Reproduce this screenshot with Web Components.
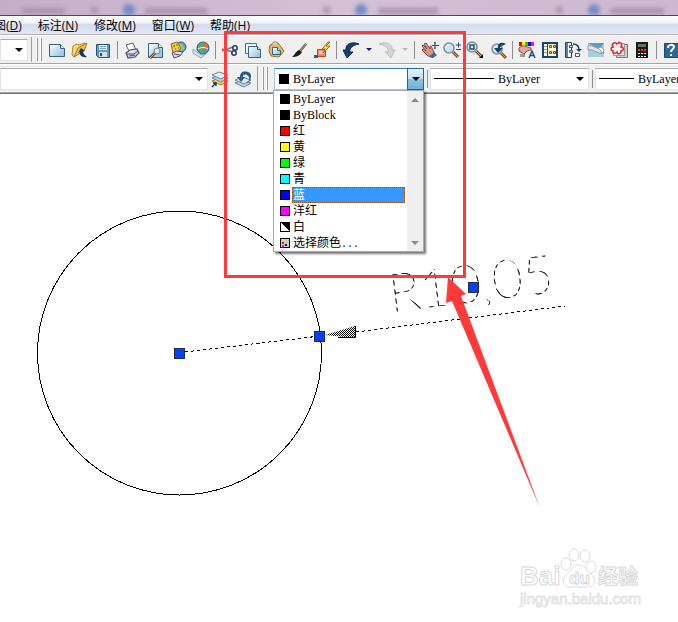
<!DOCTYPE html>
<html lang="zh-CN">
<head>
<meta charset="utf-8">
<title>CAD</title>
<style>
html, body { height: 100%; }
body { margin: 0; background: #fff; color: #000; font: 12px/16px "Liberation Serif", "Noto Sans CJK SC", serif; overflow: hidden; }
</style>
</head>
<body>
<cad-app></cad-app>
<script>
const define = (name, html, init) => customElements.define(name, class extends HTMLElement {
  constructor() {
    super();
    this.attachShadow({ mode: 'open' }).innerHTML = html;
  }
  connectedCallback() { if (init) init(this, this.shadowRoot); }
});

/* Icons share a 20x20 grid. */
const lens = (x, y) => `<path d="M${x + 4} ${y + 4}l5 5" stroke="#8a4a1c" stroke-width="3"/><path d="M${x + 4} ${y + 4}l5 5" stroke="#e09a50"/><circle cx="${x}" cy="${y}" r="5" fill="#cfe6f2" stroke="#7890a4" stroke-width="1.6"/><path d="M${x - 3} ${y}a3 3 0 0 1 3-3" stroke="#fff" fill="none"/>`;
const printer = (body, x, y) => `<g transform="translate(${x} ${y})"><path d="M4 7L1 1l7-2 3 7" fill="#fff" stroke="#62627e"/><path d="M1 9l4-3 7-1 2 4-4 4-7 1z" fill="${body}" stroke="#4d4d70" stroke-width="1.2"/><path d="M2 10l7 0 4-3M4 12l6-1" stroke="#4d4d70" fill="none"/><path d="M4 8l5-1" stroke="#fff"/></g>`;
const layers = `<path d="M2 12l7-3 9 3-7 4z" fill="#f2d437" stroke="#a48018"/><path d="M2 9l7-3 9 3-7 4z" fill="#bfd2e1" stroke="#6487a3"/><path d="M2 6l7-3 9 3-7 4z" fill="#e4eef6" stroke="#6487a3"/>`;
const ICONS = {
  new: `<path d="M2.500 4.500h11l4 4v8h-15z" fill="url(#p)" stroke="#346481"/><path d="M13.500 4.500v4h4" fill="#fff" stroke="#346481"/>`,
  open: `<path d="M3 6l4-2 2 1 6-2-2 4-9 10-2-2z" fill="#f8d978" stroke="#b08520"/><path d="M4 17L8 8l9-5-3 8z" fill="#efbd47" stroke="#a77a18"/><path d="M17 17c-5 1-8-2-7-5l-2 1 3-5 4 3h-2c0 2 1 4 4 6z" fill="#17385f"/>`,
  save: `<path d="M3.500 4.500h13v13h-11l-2-2z" fill="#5b9bca" stroke="#24567f"/><path d="M6 5h8v5H6z" fill="#f2f8fc"/><path d="M7 6.500h6M7 8.500h6" stroke="#77a4c4"/><path d="M6 12h8v5H6z" fill="#d5dfe6"/><path d="M7 13h2v3H7z" fill="#24567f"/>`,
  print: printer('#d9d9e6', 3, 4),
  preview: `<path d="M3.500 3.500h10l4 4v10h-14z" fill="url(#p)" stroke="#346481"/><path d="M13.500 3.500v4h4" fill="#fff" stroke="#346481"/><path d="M10 13l-5 5" stroke="#8a4a1c" stroke-width="3"/><path d="M10 13l-5 5" stroke="#e9a45f"/><circle cx="12" cy="11" r="3" fill="#dcedf6" stroke="#6c8396"/>`,
  publish: `<circle cx="13" cy="7" r="5" fill="#65a7c5" stroke="#275d80"/><path d="M11 3l4 2 1 4-3 2z" fill="#a9c76f"/><path d="M4 8L3 4l6-2 4 6-3 4-5 1z" fill="#f5ca3e" stroke="#94671a"/><path d="M5 6h2M8 5h2M7 9h1M10 8h1" stroke="#663"/><path d="M4 13l5-2 6 1-3 4-6 2z" fill="#dedeea" stroke="#4d4d70"/><path d="M6 14l6 1" stroke="#4d4d70"/>`,
  globe: `<circle cx="12" cy="8" r="6" fill="#4a9cc3" stroke="#245c82"/><path d="M12 2c-4 2-4 9-1 12l2-6z" fill="#67ae50"/><path d="M12 2c4 1 6 4 5 7h-5z" fill="#e2674c"/><path d="M7 9c3-2 7-2 10 0" stroke="#fff" fill="none"/><path d="M2 9l8 6 5-1-5 4-8-5z" fill="#d9e6ee" stroke="#8ca7b8"/>`,
  cut: `<path d="M2 9l11 3M2 11l11-4" stroke="#777" stroke-width="1.6"/><circle cx="15" cy="8" r="2.200" fill="none" stroke="#263d74" stroke-width="1.5"/><circle cx="14" cy="13" r="2.200" fill="none" stroke="#263d74" stroke-width="1.5"/>`,
  copy: `<path d="M2.500 3.500h11v10h-11z" fill="#edf6fa" stroke="#427390"/><path d="M5.500 6.500h9l3 3v8h-12z" fill="url(#p)" stroke="#346481"/><path d="M14.500 6.500v3h3" fill="#fff" stroke="#346481"/>`,
  paste: `<path d="M4 5l8-2 6 8-5 6-8-1-2-5z" fill="#e9bc56" stroke="#9c6e22"/><path d="M6 5c0-4 5-4 6-1" fill="#ddd" stroke="#777"/><path d="M6.500 7.500h5l3 3v4h-8z" fill="url(#p)" stroke="#346481"/><path d="M11.500 7.500v3h3" fill="#fff" stroke="#346481"/>`,
  brush: `<path d="M17 4l-6 7" stroke="#70442d" stroke-width="2.400"/><path d="M17 4l-6 7" stroke="#d7a77a"/><path d="M10 10l3 2c-2 4-6 5-10 5 3-2 3-5 7-7z" fill="#1e1a1a"/>`,
  block: `<path d="M5.500 9.500h8v7h-8z" fill="#f58b67" stroke="#c8401f"/><path d="M7 11h5v3H7z" fill="#ffc3a6"/><path d="M2 15h4v3H2z" fill="#1768b3"/><path d="M16 2l-6 7h3l-2 4 7-7h-4l4-4z" fill="#ffdf2f" stroke="#98711c"/>`,
  undo: `<path d="M18 4C11 1 4 4 5 10H2l4 8 6-6H9c-1-4 3-7 9-8z" fill="#173f6d" stroke="#102f54"/>`,
  redo: `<path d="M2 4c7-3 14 0 13 6h3l-4 8-6-6h3c1-4-3-7-9-8z" fill="#d4d6d7" stroke="#b9bcbd"/>`,
  pan: `<path d="M9 16L3 10l1-1 3 2-4-5 1-1 4 4-3-5 2-1 4 6V6h1l3 6-1 5z" fill="#d79384" stroke="#8d4c40"/><path d="M10 17l5-5 3 3-4 3z" fill="#42668c"/><path d="M16 2v7M13 5.500h7M15 3h2M15 8h2" stroke="#244b78"/>`,
  zoom: lens(7, 8) + `<path d="M14 5h5M16.500 2.500v5M14 9.500h5" stroke="#244b78"/>`,
  zoomwin: lens(7, 7) + `<path d="M5 5h4v4H5z" fill="none" stroke="#264d70" stroke-width="1.400"/><path d="M18 14v4h-4z" fill="#000"/>`,
  zoomprev: lens(9, 9) + `<path d="M18 4c-5-3-9 0-8 4H6l4 5 5-5h-3c0-2 2-2 6-4z" fill="#173f6d"/>`,
  props: `<path d="M2 2h3v4H2z" fill="#f00"/><path d="M5 2h3v4H5z" fill="#ff0"/><path d="M8 2h3v4H8z" fill="#0d0"/><path d="M11 2h3v4h-3z" fill="#00f"/><path d="M14 2h3v4h-3z" fill="#f0f"/><path d="M2 8c4-4 7-1 12 0v2l-4 1-3 3-5-3z" fill="#e8a79c" stroke="#8d4c40"/><path d="M3 14h5v3H3z" fill="#9a9a9a"/><path d="M12 18l3-7 3 7M13 15.500h4" fill="none" stroke="#244b78" stroke-width="1.400"/>`,
  design: `<path d="M3 3h14v14H3z" fill="#fffbe0" stroke="#19456d" stroke-width="2"/><path d="M7.500 3v14" stroke="#19456d"/><path d="M4 6.500h3M4 9.500h3M4 12.500h3" stroke="#78a0c0"/><path d="M9.500 5.500h2v2h-2zM13.500 5.500h2v2h-2zM9.500 11.500h2v2h-2zM13.500 11.500h2v2h-2z" fill="#f4cf48" stroke="#555"/>`,
  palette: `<path d="M2.500 2.500h6v15h-6z" fill="#fff" stroke="#19456d"/><path d="M3 3h2v14H3z" fill="#4e87b2"/><path d="M6.500 5.500h3v2h-3zM6.500 10.500h3v2h-3z" fill="#efd060" stroke="#456"/><path d="M10 4c4 0 6 2 6 6" fill="none" stroke="#19456d" stroke-width="1.500"/><path d="M13 9h6l-3 3z" fill="#19456d"/><path d="M12.500 13.500h4v3h-4z" fill="#fff" stroke="#456"/>`,
  sheets: `<path d="M2 3h16v14H2z" fill="#a6cde0"/><path d="M2 3h16l-5 6-7-4z" fill="#5f99be"/><path d="M2 6c5-2 8 4 13 2l3 5c-6 2-9-4-16-3z" fill="#e3e5e2" stroke="#8e9999"/><path d="M12 8c3-2 6 0 6 3l-3 3c1-3-1-4-3-6z" fill="#f6f6f2" stroke="#8e9999"/>`,
  markup: `<path d="M7.500 4.500h11v13h-11z" fill="#ccc" stroke="#777"/><path d="M4.500 3.500h11v12h-11z" fill="#f3f3f3" stroke="#999"/><path d="M4 11c-3-1-2-4 0-4-2-3 2-6 4-3 3-3 6 0 4 3 3 0 3 4 0 4 0 4-4 3-4 1-2 2-5 1-4-1z" fill="#fff" stroke="#f02330" stroke-width="1.600"/>`,
  calc: `<path d="M4 2h12v16H4z" fill="#191919"/><path d="M6 4h8v3H6z" fill="#59785b"/><path d="M6 10h2M9 10h2M12 10h2" stroke="#e33" stroke-width="2"/><path d="M6 13.500h2M9 13.500h2M12 13.500h2M6 16.500h2M9 16.500h2M12 16.500h2" stroke="#eee"/>`,
  help: `<path d="M3.500 3.500h14v14h-14z" fill="#2e6695" stroke="#174a78"/><path d="M7 8c0-4 6-4 6-1 0 2-3 2-3 5M10 14v2" fill="none" stroke="#fff" stroke-width="2"/>`,
  layers: layers + `<path d="M2 18l4-4M3 14h3v3" stroke="#15375c" fill="none" stroke-width="1.400"/>`,
  layerprev: `<path d="M2 14l7-3 9 3-7 4z" fill="#c2d2df" stroke="#6487a3"/><path d="M2 11l7-3 9 3-7 4z" fill="#dce7ef" stroke="#6487a3"/><path d="M17 4C11 1 7 3 7 8H4l4 5 4-5h-2c0-3 3-3 5-1 3 3 0 6-2 8 5-3 6-8 4-11z" fill="#2b5b86"/>`
};

define('cad-icon', `<style>:host{display:block;width:20px;height:20px}svg{display:block;width:100%;height:100%}</style><svg viewBox="0 0 20 20" aria-hidden="true"></svg>`,
  (el, root) => { root.querySelector('svg').innerHTML = `<defs><linearGradient id="p" x2="1" y2="1"><stop stop-color="#fff"/><stop offset="1" stop-color="#8dbcd6"/></linearGradient></defs><g fill="none">${ICONS[el.getAttribute('name')]}</g>`; });

define('tool-button', `<style>:host{display:block;flex:none;width:23px}button{display:flex;align-items:center;justify-content:center;width:100%;height:24px;padding:0;border:0;background:none}</style><button type="button"><cad-icon></cad-icon></button>`,
  (el, root) => {
    root.querySelector('button').setAttribute('aria-label', el.getAttribute('icon'));
    const old = root.querySelector('cad-icon'), icon = document.createElement('cad-icon');
    icon.setAttribute('name', el.getAttribute('icon'));
    old.replaceWith(icon);
  });

define('caret-button', `<style>:host{display:block;flex:none;width:13px;color:#101d7d}:host([off]){color:#b8babb}button{display:flex;align-items:center;justify-content:center;width:100%;height:24px;padding:0;border:0;background:none;color:inherit}i{border:3px solid transparent;border-top-color:currentColor;border-bottom:0}</style><button type="button" aria-label="history"><i></i></button>`);

define('tool-separator', `<style>:host{display:flex;flex:none;justify-content:center;width:6px}i{width:1px;height:18px;background:#8e8e8e}</style><i></i>`);

define('tool-grip', `<style>:host{display:flex;flex:none;gap:2px;align-self:stretch;padding:1px 3px 1px 4px;border-left:1px solid #a0a0a0}i{box-sizing:border-box;width:2px;border-right:1px solid #989898;background:#fff}</style><i></i><i></i>`);

define('combo-box', `<style>
:host{display:flex;flex:none;position:relative;height:22px;box-sizing:border-box;background:#fff;border:1px solid #e0e3e8;border-top-color:#abadb3;align-items:center}
select{appearance:none;flex:1;min-width:0;height:100%;margin:0;padding:0 18px 0 4px;border:0;background:none;color:#000;font:inherit;outline:0}
.tri{position:absolute;right:0;top:0;bottom:0;width:16px;display:flex;align-items:center;justify-content:center;pointer-events:none}
.tri i{border:4px solid transparent;border-top-color:#000;border-bottom:0}
:host([open]){border-color:#3c7fb1 #a6c9df #a6c9df}
:host([open]) .tri{background:linear-gradient(#e3f4fc,#b9e1f6 50%,#8cc4e4 50%,#6cb2da);outline:1px solid #2c628b;width:15px}
</style><slot name="lead"></slot><select></select><span class="tri"><i></i></span>`,
  (el, root) => {
    const select = root.querySelector('select'), value = el.getAttribute('value') || '';
    select.setAttribute('aria-label', el.getAttribute('label'));
    select.replaceChildren(new Option(value));
  });

define('color-option', `<style>
:host{display:flex;align-items:center;height:16px;gap:2px;padding:0 2px 0 6px}
i{flex:none;width:10px;height:10px;box-sizing:border-box;border:1px solid #000;background:var(--swatch)}
span{flex:1;height:14px;line-height:14px;border:1px solid transparent;white-space:nowrap;overflow:hidden}
:host([aria-selected=true]) span{background:#3399ff;color:#fff;border:1px dotted #a05010}
</style><i></i><span><slot></slot></span>`,
  el => el.style.setProperty('--swatch', el.getAttribute('swatch')));

define('color-list', `<style>
:host{display:flex;box-sizing:border-box;background:#fff;border:1px solid #a8a8b8;box-shadow:2px 2px 2px #0008}
.items{flex:1;min-width:0}
.bar{width:16px;display:flex;flex-direction:column;justify-content:space-between;align-items:center;background:#efefef}
button{width:16px;height:17px;padding:0;border:0;background:none;display:flex;align-items:center;justify-content:center}
i{border:4px solid transparent}.up{border-bottom-color:#8a8a8a;border-top:0}.down{border-top-color:#8a8a8a;border-bottom:0}
.dots{font:10px/14px "Liberation Mono",monospace}
</style>
<div class="items" role="listbox" aria-label="颜色">
<color-option role="option" swatch="#000">ByLayer</color-option>
<color-option role="option" swatch="#000">ByBlock</color-option>
<color-option role="option" swatch="#f00">红</color-option>
<color-option role="option" swatch="#ff0">黄</color-option>
<color-option role="option" swatch="#0f0">绿</color-option>
<color-option role="option" swatch="#0ff">青</color-option>
<color-option role="option" swatch="#00f" aria-selected="true">蓝</color-option>
<color-option role="option" swatch="#f0f">洋红</color-option>
<color-option role="option" swatch="linear-gradient(45deg,#fff 50%,#000 50%)">白</color-option>
<color-option role="option" swatch="radial-gradient(circle at 2px 4px,#f00 1px,transparent 1px),radial-gradient(circle at 5px 3px,#dd0 1px,transparent 1px),radial-gradient(circle at 5px 6px,#00f 1px,transparent 1px),radial-gradient(circle at 2px 7px,#f0f 1px,transparent 1px),linear-gradient(#7ff 1px,#ccc 1px)">选择颜色<span class="dots">...</span></color-option>
</div>
<div class="bar"><button type="button" aria-label="up"><i class="up"></i></button><button type="button" aria-label="down"><i class="down"></i></button></div>`);

define('line-sample', `<style>:host{display:block;flex:none;height:1px;background:#000;margin-left:3px}</style>`);

define('window-top', `<style>
:host{display:block;height:16px;box-sizing:border-box;overflow:hidden;border-bottom:1px solid #4c4850;background:linear-gradient(90deg,#c3b0c7,#d5c1d6 50%,#cdb9cf)}
svg{display:block;width:100%;height:15px;filter:blur(2px)}
</style><svg aria-hidden="true"><g fill="#a895ae"><path d="M22 8h43v6H22zM91 7h7v6h-7zM145 8h62v6h-62zM323 7h7v6h-7zM378 8h60v6h-60zM556 7h7v6h-7zM610 8h54v6h-54z"/></g><g fill="#718ac7"><circle cx="129" cy="10" r="6"/><circle cx="361" cy="10" r="6"/><circle cx="594" cy="10" r="6"/></g></svg>`);

define('menu-bar', `<style>
:host{display:flex;gap:16px;height:19px;box-sizing:border-box;border-bottom:1px solid #b4b4b8;background:linear-gradient(#fff,#f0f3fa 40%,#d5dcee 45%,#e2e6f4);font:12px/19px "Open Sans","Noto Sans CJK SC",sans-serif}
button{margin:0;padding:0;border:0;background:none;color:#000;font:inherit;white-space:nowrap}
button:first-of-type{margin-left:-6px}
</style>
<button type="button">图(<u>D</u>)</button><button type="button">标注(<u>N</u>)</button><button type="button">修改(<u>M</u>)</button><button type="button">窗口(<u>W</u>)</button><button type="button">帮助(<u>H</u>)</button>`);

define('tool-row', `<style>:host{display:flex;align-items:center;height:29px;box-sizing:border-box;padding:1px 0;border-bottom:1px solid #a5a5a5;border-top:1px solid #fff;background:#f0f0f0;overflow:hidden}</style><slot></slot>`);

define('drawing-canvas', `<style>
:host{display:block;background:#fff;border-top:1px solid #777;overflow:hidden}
svg{display:block;width:100%;height:100%}
.dim{font:100 53px Lato,sans-serif;fill:url(#dash);stroke:url(#dash);stroke-width:.3px}
.brand{font:bold 26px "Liberation Sans",sans-serif;fill:#fff;stroke:#d9d9d9;stroke-width:1px}
.cn{font:bold 20px "Noto Sans CJK SC",sans-serif}
.du{font-size:17px}
.site{font:15px "Liberation Sans",sans-serif;fill:#fff;stroke:#e4e4e4;stroke-width:1px}
</style>
<svg role="img" aria-label="drawing">
<defs>
<pattern id="hatch" width="2" height="2" patternUnits="userSpaceOnUse"><path d="M0 0h1v1H0zM1 1h1v1H1z"/></pattern>
<pattern id="dash" width="7" height="7" patternUnits="userSpaceOnUse" patternTransform="rotate(40)"><path d="M0 0h7v4H0z"/></pattern>
</defs>
<g transform="translate(0 -94)">
<g fill="none" stroke="#000" shape-rendering="crispEdges"><circle cx="179.500" cy="353" r="142"/><path d="M185 352L320 336M356 332L565 306" stroke-dasharray="3 3"/></g>
<path d="M325 335l30-9v12z" fill="url(#hatch)"/><path d="M338 337.500h17.500V326" fill="none" stroke="#000"/>
<text class="dim" transform="translate(391 312) rotate(-7)">R10,05</text>
<g fill="#0040ff" stroke="#222c44" shape-rendering="crispEdges"><path d="M174.500 348.500h10v10h-10zM314.500 331.500h10v10h-10zM468.500 282.500h10v10h-10z"/></g>
<text class="brand" x="520" y="585">Bai</text>
<g fill="#fff" stroke="#dcdcdc"><ellipse cx="566" cy="564" rx="5" ry="6"/><ellipse cx="574" cy="555" rx="5" ry="6"/><ellipse cx="585" cy="556" rx="5" ry="6"/><ellipse cx="591" cy="567" rx="5" ry="6"/><path d="M578 565c-6 0-6 6-11 9-6 5-5 13 3 13h18c8 0 9-8 3-13-5-3-6-9-13-9z"/></g>
<text class="brand du" x="569" y="584">du</text><text class="brand cn" x="598" y="584">经验</text>
<text class="site" x="520" y="604">jingyan.baidu.com</text>
</g></svg>`);

define('callout-arrow', `<style>:host{display:block;pointer-events:none}svg{display:block;width:100%;height:100%}</style>
<svg aria-hidden="true"><path d="M225.500 32.500h239v244h-239z" fill="none" stroke="#ff3a3a" stroke-width="3"/><path d="M448 277l18 17-5 2 79 212-88-207-6 2z" fill="#ff3a3a"/></svg>`);

const buttons = s => s.split(' ').map(n => n === '|' ? '<tool-separator></tool-separator>' : n === 'v' ? '<caret-button></caret-button>' : n === 'x' ? '<caret-button off></caret-button>' : `<tool-button icon="${n}"></tool-button>`).join('');

define('cad-app', `<style>
:host{display:flex;flex-direction:column;position:relative;height:100vh;overflow:hidden}
window-top,menu-bar,tool-row{flex:none}
drawing-canvas{flex:1;min-height:0}
.scale{width:28px;margin-right:3px}.layer{width:208px}.color{width:150px;margin-left:3px}.ltype{width:159px}.weight{width:159px}
.color b{width:10px;height:10px;margin-left:4px;flex:none;background:#000}
.ltype line-sample{width:60px}.weight line-sample{width:35px}
.edge{width:3px;flex:none}
.tools{display:flex;align-items:center}
color-list{position:absolute;left:273px;top:90px;width:151px}
callout-arrow{position:absolute;inset:0}
</style>
<window-top></window-top>
<menu-bar></menu-bar>
<tool-row><combo-box class="scale" label="样式"></combo-box><tool-grip></tool-grip><div class="tools">${buttons('new open save | print preview publish globe | cut copy paste brush block | undo v redo x | pan zoom zoomwin zoomprev | props design palette sheets markup calc | help')}</div></tool-row>
<tool-row><combo-box class="layer" label="图层"></combo-box>${buttons('layers layerprev')}<span class="edge"></span><tool-grip></tool-grip><combo-box open class="color" label="颜色" value="ByLayer"><b slot="lead"></b></combo-box><tool-separator></tool-separator><combo-box class="ltype" label="线型" value="ByLayer"><line-sample slot="lead"></line-sample></combo-box><tool-separator></tool-separator><combo-box class="weight" label="线宽" value="ByLayer"><line-sample slot="lead"></line-sample></combo-box></tool-row>
<drawing-canvas></drawing-canvas>
<color-list></color-list>
<callout-arrow></callout-arrow>`);
</script>
</body>
</html>
